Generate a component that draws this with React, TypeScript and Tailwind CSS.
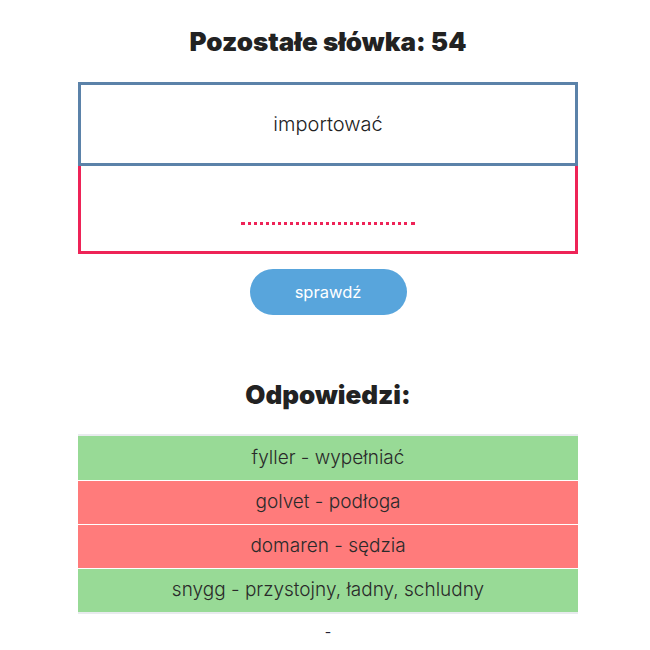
import React from "react";

const rows = [
  { text: "fyller - wypełniać", ok: true },
  { text: "golvet - podłoga", ok: false },
  { text: "domaren - sędzia", ok: false },
  { text: "snygg - przystojny, ładny, schludny", ok: true },
];

export default function App() {
  return (
    <div
      className="w-[650px] h-[650px] bg-white flex flex-col items-center pl-[6px] text-[#222]"
      style={{ fontFamily: "Inter, 'Noto Sans', sans-serif" }}
    >
      <h1 className="mt-[26px] h-[32px] leading-[32px] text-[26px] font-black text-[#222]">
        Pozostałe słówka: 54
      </h1>
      <div className="mt-[24px] w-[500px] flex flex-col">
        <div className="h-[84px] border-[3px] border-[#5b82a9] flex items-center justify-center text-[20px] font-light text-[#222]">
          importować
        </div>
        <div className="h-[88px] border-[3px] border-t-0 border-[#ee2357] flex justify-center">
          <div className="mt-[27px] w-[174px] h-[32px] border-b-[3px] border-dotted border-[#ee2357]" />
        </div>
      </div>
      <button className="mt-[15px] w-[157px] h-[46px] rounded-full bg-[#58a5dc] text-white text-[16.5px] font-normal">
        sprawdź
      </button>
      <h2 className="mt-[63px] h-[34px] leading-[34px] text-[26px] font-black text-[#222]">
        Odpowiedzi:
      </h2>
      <div className="mt-[22px] w-[500px] flex flex-col border-t-2 border-b-2 border-[#e8ebee]">
        {rows.map((r, i) => (
          <div
            key={i}
            className={`h-[44px] flex items-center justify-center text-[19px] font-light text-[#2a2a2a] ${
              i > 0 ? "border-t border-white" : ""
            } ${r.ok ? "bg-[#98da96]" : "bg-[#ff7b7b]"}`}
          >
            {r.text}
          </div>
        ))}
      </div>
      <div className="mt-[8px] text-[14px] leading-[20px] text-[#223]">-</div>
    </div>
  );
}
